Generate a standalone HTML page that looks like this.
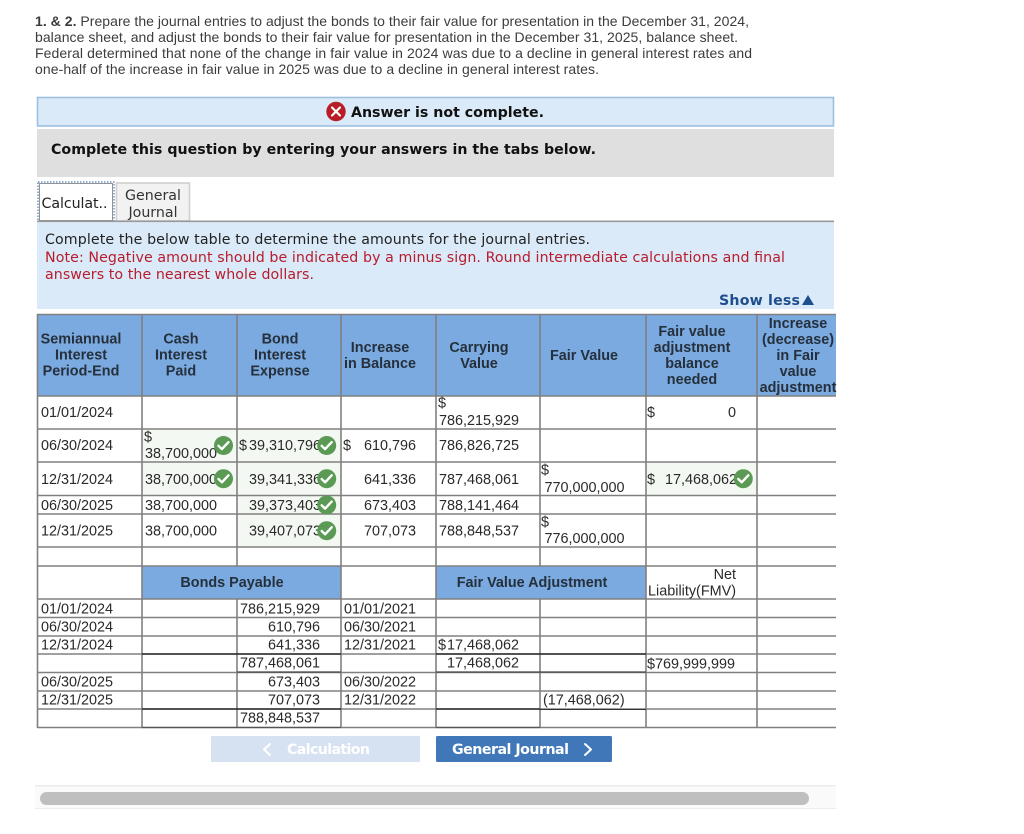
<!DOCTYPE html>
<html lang="en"><head><meta charset="utf-8"><title>Bonds</title>
<style>
html,body{margin:0;padding:0;background:#fff;width:1024px;height:834px;overflow:hidden}
svg{display:block}
.p{font:14px "Liberation Sans",sans-serif;fill:#3c3c3c}
.v{font:14.2px "DejaVu Sans",sans-serif}
.vb{font:bold 14.2px "DejaVu Sans",sans-serif}
.t{font:14.4px "Liberation Sans",sans-serif;fill:#2a2a2a}
.h{font:bold 14.4px "Liberation Sans",sans-serif;fill:#26303c;text-anchor:middle}
.e{text-anchor:end}
.g line{stroke:#808080;stroke-width:1.6}
.k{fill:none;stroke:#fff;stroke-width:2.4;stroke-linecap:round;stroke-linejoin:round}
</style></head><body>
<svg width="1024" height="834" viewBox="0 0 1024 834" xmlns="http://www.w3.org/2000/svg">
<defs><g id="c"><circle r="9.5" fill="#5a9a55"/><path class="k" d="M-5 0.3L-1.6 3.6L5 -3.4"/></g></defs>

<text class="p" x="35" y="26" textLength="714" lengthAdjust="spacing"><tspan font-weight="bold">1. &amp; 2.</tspan> Prepare the journal entries to adjust the bonds to their fair value for presentation in the December 31, 2024,</text>
<text class="p" x="35" y="42" textLength="703" lengthAdjust="spacing">balance sheet, and adjust the bonds to their fair value for presentation in the December 31, 2025, balance sheet.</text>
<text class="p" x="35" y="58" textLength="717" lengthAdjust="spacing">Federal determined that none of the change in fair value in 2024 was due to a decline in general interest rates and</text>
<text class="p" x="35" y="74" textLength="564" lengthAdjust="spacing">one-half of the increase in fair value in 2025 was due to a decline in general interest rates.</text>

<rect x="37.5" y="97.5" width="796" height="28.5" fill="#daeaf8" stroke="#9dbfe0" stroke-width="1.6"/>
<circle cx="336" cy="111.5" r="9.7" fill="#b81c25"/>
<path d="M332 107.5L340 115.5M340 107.5L332 115.5" stroke="#fff" stroke-width="2.2" stroke-linecap="round"/>
<text class="vb" x="351" y="117" textLength="193" lengthAdjust="spacing" fill="#111">Answer is not complete.</text>

<rect x="37" y="129" width="797" height="48" fill="#dfdfdf"/>
<text class="vb" x="51" y="154" textLength="545" lengthAdjust="spacing" fill="#111">Complete this question by entering your answers in the tabs below.</text>

<rect x="116.5" y="183" width="73" height="38" fill="#f2f2f2" stroke="#cfcfcf" stroke-width="1.6"/>
<rect x="38" y="182" width="76" height="39" fill="#fff" stroke="#4f7fb8" stroke-width="1.2" stroke-dasharray="1.5 1.5"/>
<rect x="39.5" y="183.5" width="73" height="37" fill="#fff" stroke="#777" stroke-width="0.8"/>
<text class="v" x="41.5" y="208" fill="#222" textLength="66" lengthAdjust="spacing">Calculat..</text>
<text class="v" x="153" y="200" fill="#333" text-anchor="middle">General</text>
<text class="v" x="153" y="217" fill="#333" text-anchor="middle">Journal</text>

<rect x="37" y="221" width="797" height="88" fill="#daeaf8"/>
<rect x="37" y="220.5" width="797" height="1.6" fill="#999"/>
<text class="v" x="45" y="244" fill="#222" textLength="545" lengthAdjust="spacing">Complete the below table to determine the amounts for the journal entries.</text>
<text class="v" x="45" y="262" fill="#b81c2c" textLength="740" lengthAdjust="spacing">Note: Negative amount should be indicated by a minus sign. Round intermediate calculations and final</text>
<text class="v" x="45" y="279" fill="#b81c2c" textLength="269" lengthAdjust="spacing">answers to the nearest whole dollars.</text>
<text class="vb" x="719" y="305" fill="#1e4e8c" textLength="81" lengthAdjust="spacing">Show less</text>
<path d="M802 305L808 295L814 305Z" fill="#1e4e8c"/>

<!-- fills -->
<rect x="37" y="314" width="799" height="82" fill="#7aaae0"/>
<rect x="142" y="566" width="199" height="33" fill="#7aaae0"/>
<rect x="436" y="566" width="210" height="33" fill="#7aaae0"/>
<g fill="#f4f8f3">
<rect x="142" y="429" width="95" height="66"/>
<rect x="237" y="429" width="104" height="118"/>
<rect x="646" y="462" width="111" height="33"/>
</g>

<!-- grid -->
<g class="g">
<line x1="37" y1="314.5" x2="836" y2="314.5"/>
<line x1="37" y1="396" x2="836" y2="396"/>
<line x1="37" y1="429" x2="836" y2="429"/>
<line x1="37" y1="462" x2="836" y2="462"/>
<line x1="37" y1="495.5" x2="836" y2="495.5"/>
<line x1="37" y1="514" x2="836" y2="514"/>
<line x1="37" y1="547" x2="836" y2="547"/>
<line x1="37" y1="566" x2="836" y2="566"/>
<line x1="37" y1="599" x2="836" y2="599"/>
<line x1="37" y1="617.5" x2="836" y2="617.5"/>
<line x1="37" y1="636" x2="836" y2="636"/>
<line x1="37" y1="654" x2="836" y2="654"/>
<line x1="37" y1="672.5" x2="836" y2="672.5"/>
<line x1="37" y1="691" x2="836" y2="691"/>
<line x1="37" y1="709" x2="836" y2="709"/>
<line x1="37" y1="727.5" x2="836" y2="727.5"/>
<line x1="37.5" y1="314" x2="37.5" y2="728"/>
<line x1="142" y1="314" x2="142" y2="728"/>
<line x1="237" y1="314" x2="237" y2="566"/>
<line x1="237" y1="599" x2="237" y2="728"/>
<line x1="341" y1="314" x2="341" y2="728"/>
<line x1="436" y1="314" x2="436" y2="728"/>
<line x1="540" y1="314" x2="540" y2="566"/>
<line x1="540" y1="599" x2="540" y2="728"/>
<line x1="646" y1="314" x2="646" y2="728"/>
<line x1="757" y1="314" x2="757" y2="728"/>
</g>
<g stroke="#111" stroke-width="1.3">
<line x1="142" y1="654" x2="341" y2="654"/>
<line x1="237" y1="672" x2="341" y2="672" stroke="#444"/>
<line x1="142" y1="709" x2="341" y2="709"/>
<line x1="142" y1="727.5" x2="341" y2="727.5" stroke="#555"/>
<line x1="436" y1="654" x2="646" y2="654"/>
<line x1="436" y1="672" x2="646" y2="672" stroke="#444"/>
<line x1="436" y1="709" x2="540" y2="709"/>
<line x1="540" y1="709.5" x2="646" y2="709.5" stroke-width="0.8"/>
<line x1="436" y1="727.5" x2="540" y2="727.5" stroke="#555"/>
</g>

<!-- headers -->
<text class="h" x="81" y="343.5">Semiannual</text><text class="h" x="81" y="359.5">Interest</text><text class="h" x="81" y="375.5">Period-End</text>
<text class="h" x="181" y="343.5">Cash</text><text class="h" x="181" y="359.5">Interest</text><text class="h" x="181" y="375.5">Paid</text>
<text class="h" x="280" y="343.5">Bond</text><text class="h" x="280" y="359.5">Interest</text><text class="h" x="280" y="375.5">Expense</text>
<text class="h" x="380" y="352">Increase</text><text class="h" x="380" y="368">in Balance</text>
<text class="h" x="479" y="352">Carrying</text><text class="h" x="479" y="368">Value</text>
<text class="h" x="584" y="360">Fair Value</text>
<text class="h" x="692" y="336">Fair value</text><text class="h" x="692" y="352">adjustment</text><text class="h" x="692" y="368">balance</text><text class="h" x="692" y="384">needed</text>
<text class="h" x="798" y="328">Increase</text><text class="h" x="798" y="344">(decrease)</text><text class="h" x="798" y="360">in Fair</text><text class="h" x="798" y="376">value</text><text class="h" x="798" y="392">adjustment</text>
<text class="h" x="232" y="587">Bonds Payable</text>
<text class="h" x="532" y="587">Fair Value Adjustment</text>

<!-- table 1 -->
<g class="t">
<text x="41" y="417">01/01/2024</text>
<text x="41" y="450">06/30/2024</text>
<text x="41" y="484">12/31/2024</text>
<text x="41" y="510">06/30/2025</text>
<text x="41" y="535.5">12/31/2025</text>

<text x="144" y="441.5">$</text><text x="145" y="458">38,700,000</text>
<text x="145" y="484">38,700,000</text>
<text x="145" y="510">38,700,000</text>
<text x="145" y="535.5">38,700,000</text>

<text x="239" y="450">$</text><text x="249" y="450">39,310,796</text>
<text x="249" y="484">39,341,336</text>
<text x="249" y="510">39,373,403</text>
<text x="249" y="535.5">39,407,073</text>

<text x="343" y="450">$</text>
<text class="e" x="416" y="450">610,796</text>
<text class="e" x="416" y="484">641,336</text>
<text class="e" x="416" y="510">673,403</text>
<text class="e" x="416" y="535.5">707,073</text>

<text x="438" y="407.5">$</text><text x="439" y="425">786,215,929</text>
<text x="439" y="450">786,826,725</text>
<text x="439" y="484">787,468,061</text>
<text x="439" y="510">788,141,464</text>
<text x="439" y="535.5">788,848,537</text>

<text x="541" y="474.5">$</text><text x="544.5" y="492">770,000,000</text>
<text x="541" y="526.5">$</text><text x="544.5" y="543">776,000,000</text>

<text x="647" y="417">$</text><text class="e" x="736" y="417">0</text>
<text x="647" y="484">$</text><text x="665" y="484">17,468,062</text>

<!-- table 2 -->
<g transform="translate(0,-0.7)">
<text x="41" y="614">01/01/2024</text>
<text x="41" y="632">06/30/2024</text>
<text x="41" y="650">12/31/2024</text>
<text x="41" y="687">06/30/2025</text>
<text x="41" y="705">12/31/2025</text>

<text class="e" x="320" y="614">786,215,929</text>
<text class="e" x="320" y="632">610,796</text>
<text class="e" x="320" y="650">641,336</text>
<text class="e" x="320" y="668">787,468,061</text>
<text class="e" x="320" y="687">673,403</text>
<text class="e" x="320" y="705">707,073</text>
<text class="e" x="320" y="723">788,848,537</text>

<text x="344" y="614">01/01/2021</text>
<text x="344" y="632">06/30/2021</text>
<text x="344" y="650">12/31/2021</text>
<text x="344" y="687">06/30/2022</text>
<text x="344" y="705">12/31/2022</text>

<text x="438" y="650">$</text><text class="e" x="519" y="650">17,468,062</text>
<text class="e" x="519" y="668">17,468,062</text>
<text x="543" y="705">(17,468,062)</text>

<text class="e" x="736" y="579.7">Net</text>
<text class="e" x="736" y="596">Liability(FMV)</text>
<text x="647" y="669">$769,999,999</text>
</g>
</g>

<!-- checks -->
<use href="#c" x="223.5" y="445.5"/>
<use href="#c" x="326.7" y="445.5"/>
<use href="#c" x="223.5" y="478.7"/>
<use href="#c" x="326.7" y="478.7"/>
<use href="#c" x="326.7" y="505"/>
<use href="#c" x="326.7" y="530.7"/>
<use href="#c" x="743.3" y="478.7"/>

<!-- buttons -->
<rect x="211" y="736" width="209" height="26" rx="1.5" fill="#d6e2f1"/>
<path d="M270 744L264 749.5L270 755" fill="none" stroke="#fff" stroke-width="2" stroke-linecap="round" stroke-linejoin="round"/>
<text class="vb" x="287" y="754" fill="#fff" textLength="83" lengthAdjust="spacing">Calculation</text>
<rect x="436" y="736" width="176" height="26" rx="1.5" fill="#3f77b8"/>
<text class="vb" x="452" y="754" fill="#fff" textLength="117" lengthAdjust="spacing">General Journal</text>
<path d="M585 744L591 749.5L585 755" fill="none" stroke="#fff" stroke-width="2" stroke-linecap="round" stroke-linejoin="round"/>

<!-- scrollbar -->
<rect x="35" y="785" width="801" height="24" fill="#fafafa"/>
<rect x="35" y="785" width="801" height="1.5" fill="#ececec"/>
<rect x="35" y="808" width="801" height="1" fill="#ececec"/>
<rect x="40" y="792" width="769" height="13" rx="6.5" fill="#bfbfbf"/>
</svg>
</body></html>
